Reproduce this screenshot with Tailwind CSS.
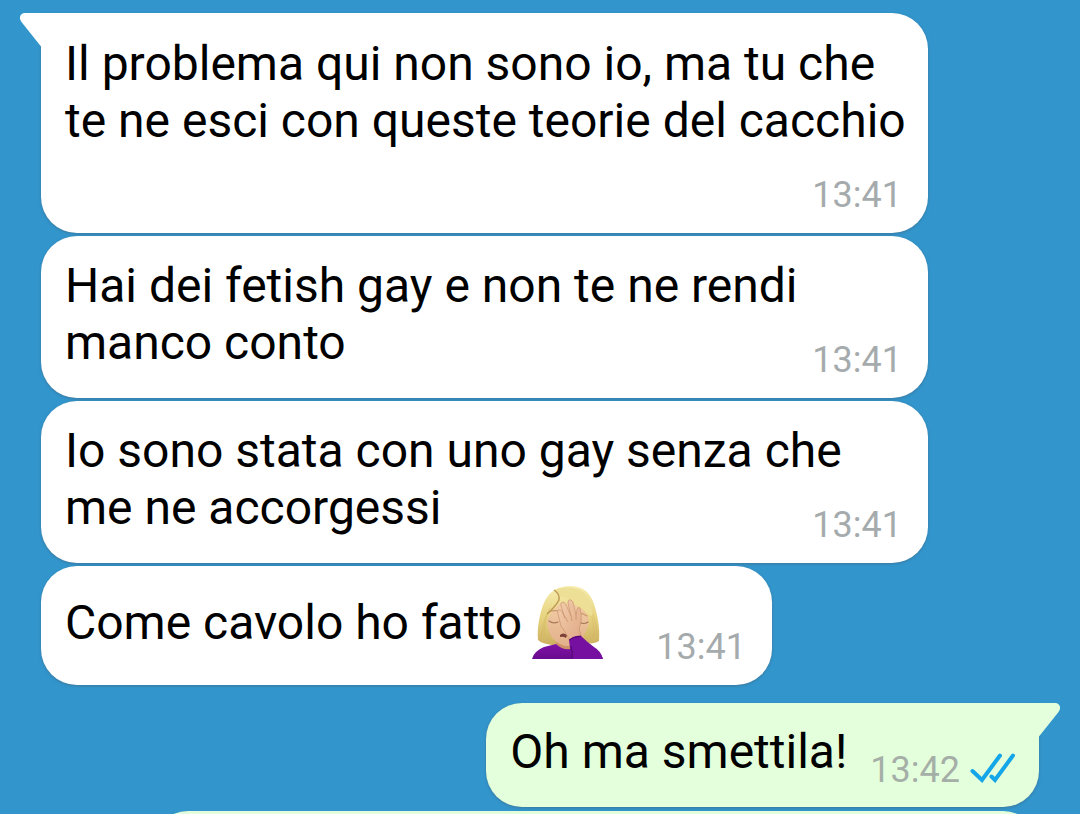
<!DOCTYPE html>
<html lang="it">
<head>
<meta charset="utf-8">
<meta name="viewport" content="width=device-width, initial-scale=1">
<title>Chat</title>
<script src="https://cdn.jsdelivr.net/npm/@tailwindcss/browser@4"></script>
</head>
<body class="bg-[#3296cd] font-[Roboto,sans-serif] text-black">
<main class="flex h-screen flex-col gap-[18px] overflow-hidden pt-[13px] pr-[41px] pl-[41px]">
  <section class="flex max-w-[887px] shrink-0 flex-col gap-[3px]">
    <article class="relative flex flex-col gap-[25px] rounded-[36px] rounded-tl-none bg-white pt-[22px] pr-[20px] pb-[17px] pl-[24px] shadow-[0_1px_3px_rgba(70,90,110,0.5)]">
      <svg class="absolute top-0 -left-[21px] h-[34px] w-[22px]" viewBox="0 0 22 34" aria-hidden="true"><path d="M22 0H5C0 0-1.500 5 1.500 9L21 33.500H22Z" fill="#fff"/></svg>
      <p class="text-[48px] leading-[57px] whitespace-nowrap">Il problema qui non sono io, ma tu che<br>te ne esci con queste teorie del cacchio</p>
      <time class="mr-[6px] self-end text-[36px] leading-[42px] text-[#a5abad]">13:41</time>
    </article>
    <article class="flex items-end rounded-[36px] bg-white pt-[21px] pr-[26px] pb-[17px] pl-[24px] shadow-[0_1px_3px_rgba(70,90,110,0.5)]">
      <p class="w-0 grow pb-[10px] text-[48px] leading-[57px] whitespace-nowrap">Hai dei fetish gay e non te ne rendi<br>manco conto</p>
      <time class="text-[36px] leading-[42px] text-[#a5abad]">13:41</time>
    </article>
    <article class="flex items-end rounded-[36px] bg-white pt-[21px] pr-[26px] pb-[17px] pl-[24px] shadow-[0_1px_3px_rgba(70,90,110,0.5)]">
      <p class="w-0 grow pb-[10px] text-[48px] leading-[57px] whitespace-nowrap">Io sono stata con uno gay senza che<br>me ne accorgessi</p>
      <time class="text-[36px] leading-[42px] text-[#a5abad]">13:41</time>
    </article>
    <article class="flex w-full max-w-[731px] items-end justify-between rounded-[36px] bg-white pt-[20px] pr-[26px] pb-[17px] pl-[24px] shadow-[0_1px_3px_rgba(70,90,110,0.5)]">
      <p class="flex items-center gap-[10px] pb-[9px] text-[48px] leading-[57px] whitespace-nowrap">Come cavolo ho fatto
        <svg class="h-[73px] w-[72px]" viewBox="0 0 72 73" role="img" aria-label="Donna con la mano sul viso">
          <defs>
            <linearGradient id="hair" x1="0" y1="0" x2="0" y2="1"><stop offset="0" stop-color="#f7edb0"/><stop offset=".5" stop-color="#e8d582"/><stop offset="1" stop-color="#cdb060"/></linearGradient>
            <linearGradient id="skin" x1="0" y1="0" x2="0" y2="1"><stop offset="0" stop-color="#f1cda6"/><stop offset="1" stop-color="#e2b08a"/></linearGradient>
            <linearGradient id="hand" x1="0" y1="0" x2="1" y2="1"><stop offset="0" stop-color="#f3cfad"/><stop offset="1" stop-color="#dfa785"/></linearGradient>
            <linearGradient id="shirt" x1="0" y1="0" x2="0" y2="1"><stop offset="0" stop-color="#8012a6"/><stop offset="1" stop-color="#680b8e"/></linearGradient>
          </defs>
          <path d="M6 54C5 43 7 31 11 19C16 6 25 0 38 0C51 0 58 6 62 18C66 30 68 43 67 55C62 58 56 58 51 57L20 59C14 58 9 57 6 54Z" fill="url(#hair)"/>
          <path d="M12 50Q12 34 18 22M9 51Q11 38 14 29M62 51Q62 35 58 24M65 50Q65 38 61 28" fill="none" stroke="#c8a650" stroke-opacity=".3"/>
          <path d="M25 48H45V66H32Q26 63 24 58Z" fill="#ce9068"/>
          <path d="M15 35Q19 24 27 18Q46 15 56 29Q58 38 54 45Q47 61 33 60Q22 57 18 48Q15 42 15 35Z" fill="url(#skin)"/>
          <path d="M27 10Q43 13 52 24Q56 29 60 30Q61 17 53 7Q40-2 22 4Q29 8 27 16Q25 20 20 24Q29 19 27 10Z" fill="#eedf96"/>
          <path d="M22 4Q28 8 27 14Q24 20 15 28" fill="none" stroke="#a87b36" stroke-opacity=".7" stroke-width="1.500"/>
          <path d="M17 26Q21 24 27 25M46 27Q51 27 55 30" fill="none" stroke="#c79a66" stroke-width="1.200" stroke-linecap="round"/>
          <path d="M17 35Q21 38 26 36M47 36Q52 39 56 36" fill="none" stroke="#a9795a" stroke-width="1.200" stroke-linecap="round"/>
          <path d="M28 49Q31 46 35 49L34 52Q31 50 28 51Z" fill="#7c4038"/>
          <path d="M0 73Q2 65 12 61L24 58Q32 66 43 62L58 61Q68 64 71 73Z" fill="url(#shirt)"/>
          <path d="M29 40L26 28Q25 23 28 24Q30 24 32 30L33 32L29 20Q28 16 31 16Q33 16 35 21L39 30L36 17Q36 13 39 14Q41 14 42 20L44 29L45 24Q46 20 48 22Q51 34 47 43L50 52L38 55Q35 48 29 40Z" fill="url(#hand)" stroke="#c48a66" stroke-width=".6"/>
          <path d="M33 31L36 36M39 30L40 35M44 29V34" stroke="#c78b62" stroke-opacity=".7"/>
          <path d="M37 54Q42 49 49 50Q55 56 62 61Q69 65 71 73H40Q38 64 37 54Z" fill="#7610a0"/>
          <path d="M37 54Q42 51 49 50M39 60Q41 66 40 73" fill="none" stroke="#4d086d"/>
        </svg>
      </p>
      <time class="text-[36px] leading-[42px] text-[#a5abad]">13:41</time>
    </article>
  </section>
  <section class="flex shrink-0 flex-col items-end gap-[4px]">
    <article class="relative flex items-end gap-[23px] rounded-[36px] rounded-tr-none bg-[#e4ffdb] pt-[20px] pr-[24px] pb-[16px] pl-[24px] shadow-[0_1px_3px_rgba(70,90,110,0.5)]">
      <svg class="absolute top-0 -right-[21px] h-[34px] w-[22px]" viewBox="0 0 22 34" aria-hidden="true"><path d="M0 0H17C22 0 23.500 5 20.500 9L1 33.500H0Z" fill="#e4ffdb"/></svg>
      <p class="pb-[11px] text-[48px] leading-[57px] whitespace-nowrap">Oh ma smettila!</p>
      <div class="flex items-center gap-[10px]">
        <time class="text-[36px] leading-[42px] text-[#a5afa8]">13:42</time>
        <svg class="mb-[4px] h-[30px] w-[45px]" viewBox="0 0 45 30" role="img" aria-label="Letto" fill="none" stroke="#14a6e8" stroke-width="4" stroke-linecap="round"><path d="M2.500 18L12 27L30 2.500M21.500 23.500L25 27L43 2.500"/></svg>
      </div>
    </article>
    <article class="h-[104px] w-full max-w-[887px] rounded-[36px] bg-[#e4ffdb]" aria-label="Messaggio successivo"></article>
  </section>
</main>
</body>
</html>
